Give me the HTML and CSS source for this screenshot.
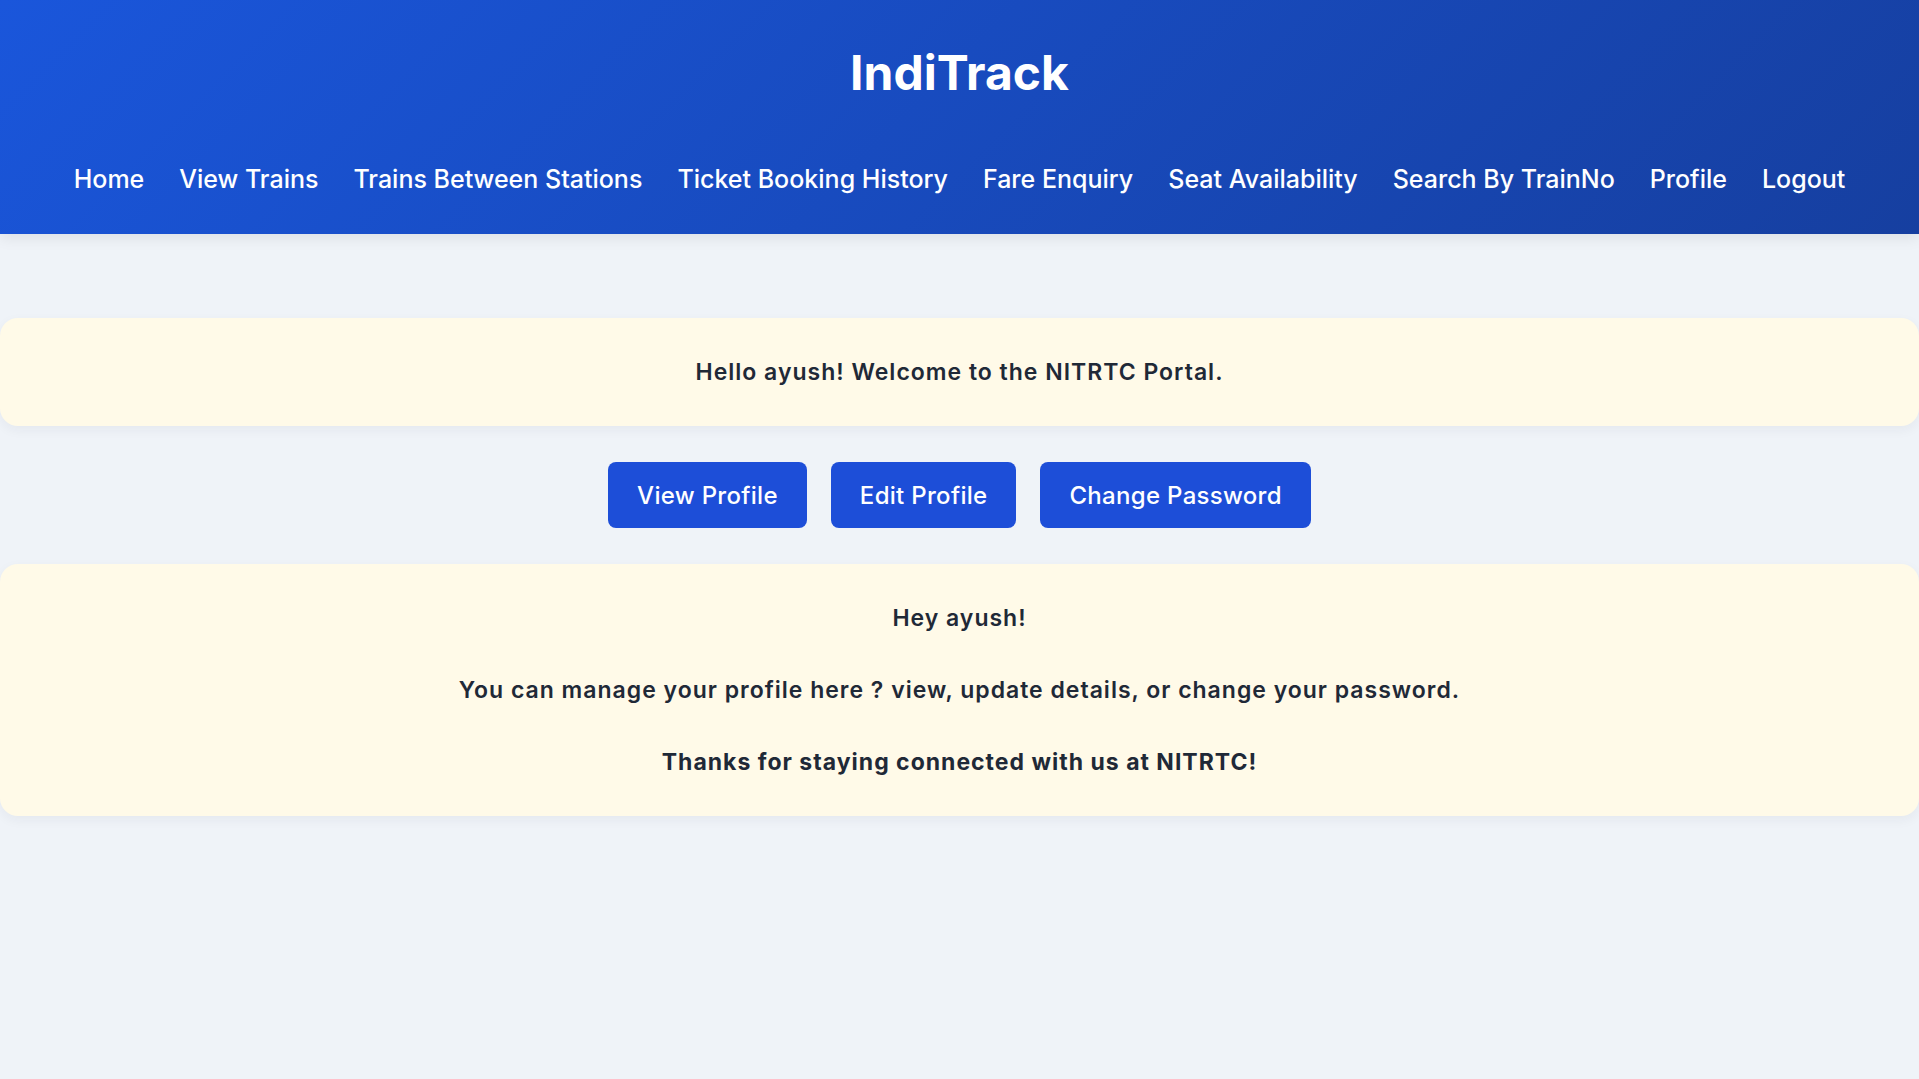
FILE: index.html
```html
<!DOCTYPE html>
<html lang="en">
<head>
<meta charset="utf-8">
<title>IndiTrack</title>
<link rel="stylesheet" href="styles.css">
</head>
<body>
<header class="site-header">
  <h1 class="brand">IndiTrack</h1>
  <nav class="main-nav">
    <a href="#">Home</a>
    <a href="#">View Trains</a>
    <a href="#">Trains Between Stations</a>
    <a href="#">Ticket Booking History</a>
    <a href="#">Fare Enquiry</a>
    <a href="#">Seat Availability</a>
    <a href="#">Search By TrainNo</a>
    <a href="#">Profile</a>
    <a href="#">Logout</a>
  </nav>
</header>
<main class="content">
  <section class="card welcome">
    <p>Hello ayush! Welcome to the NITRTC Portal.</p>
  </section>
  <div class="actions">
    <a class="btn" href="#">View Profile</a>
    <a class="btn" href="#">Edit Profile</a>
    <a class="btn" href="#">Change Password</a>
  </div>
  <section class="card info">
    <p>Hey ayush!</p>
    <p>You can manage your profile here ? view, update details, or change your password.</p>
    <p class="strong">Thanks for staying connected with us at NITRTC!</p>
  </section>
</main>
</body>
</html>
```
FILE: styles.css
```css
* { box-sizing: border-box; }
html, body { margin: 0; padding: 0; }
body {
  background: #eff3f8;
  font-family: "Inter", "Open Sans", "Liberation Sans", sans-serif;
  color: #1f2937;
  min-height: 1079px;
}
.site-header {
  background: linear-gradient(135deg, #1a56db 0%, #163fa0 100%);
  height: 234px;
  display: flex;
  flex-direction: column;
  align-items: center;
  padding-top: 45px;
  box-shadow: 0 4px 14px rgba(0,0,0,0.08);
}
.brand {
  margin: 0;
  color: #fff;
  font-size: 48px;
  font-weight: 700;
  line-height: 56px;
  letter-spacing: 0;
}
.main-nav {
  margin-top: 62px;
  display: flex;
  gap: 35px;
  justify-content: center;
}
.main-nav a {
  color: #fff;
  text-decoration: none;
  font-size: 25px;
  font-weight: 500;
  line-height: 32px;
}
.content {
  padding-top: 84px;
  display: flex;
  flex-direction: column;
  gap: 36px;
}
.card {
  background: #fffae8;
  border-radius: 18px;
  box-shadow: 0 4px 12px rgba(30, 41, 59, 0.05);
  text-align: center;
  padding: 36px 20px;
}
.card p {
  margin: 0;
  font-size: 23px;
  font-weight: 600;
  line-height: 36px;
  letter-spacing: 1px;
}
.info {
  display: flex;
  flex-direction: column;
  gap: 36px;
}
.info .strong { font-weight: 700; }
.actions {
  display: flex;
  justify-content: center;
  gap: 24px;
}
.btn {
  background: #1d4ed8;
  color: #fff;
  text-decoration: none;
  font-size: 24px;
  font-weight: 500;
  letter-spacing: 0.3px;
  height: 66px;
  padding: 0 29px;
  display: flex;
  align-items: center;
  border-radius: 8px;
}
```
